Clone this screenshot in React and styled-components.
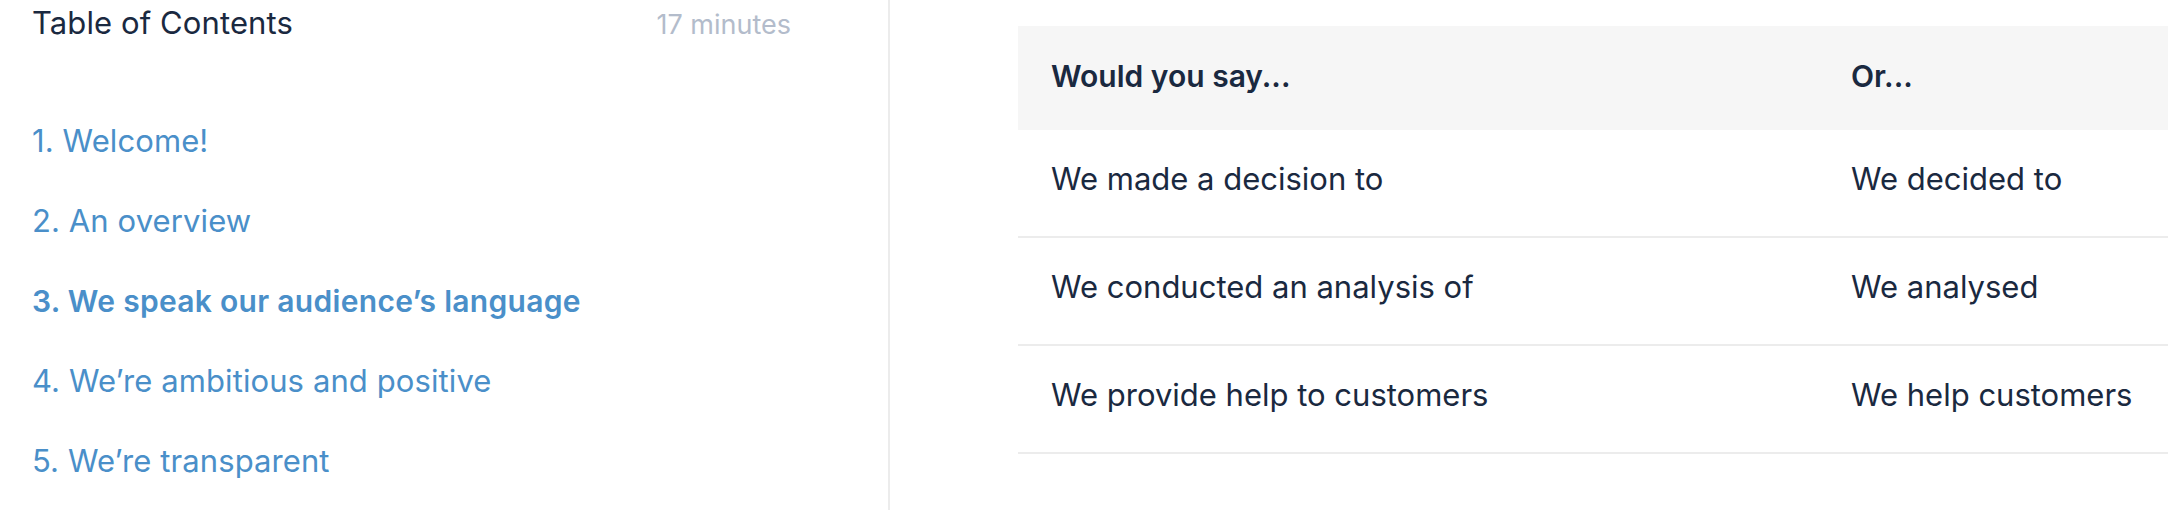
import React from 'react'
import styled, { createGlobalStyle } from 'styled-components'

const GlobalStyle = createGlobalStyle`
  html, body {
    margin: 0;
    padding: 0;
    background: #fff;
    overflow: hidden;
  }
  body {
    font-family: Inter, "Noto Sans", sans-serif;
    color: #1a2940;
  }
`

const Page = styled.div`
  display: flex;
  width: 2168px;
  height: 510px;
  overflow: hidden;
`

// Left column: table of contents
const Sidebar = styled.aside`
  flex: 0 0 890px;
  box-sizing: border-box;
  padding: 5px 97px 0 32px;
  border-right: 2px solid #ececec;
`

const SidebarHead = styled.div`
  display: flex;
  justify-content: space-between;
  align-items: baseline;
  line-height: 36px;
`

const Title = styled.h2`
  margin: 0;
  font-size: 31px;
  font-weight: 400;
  letter-spacing: 0.1px;
  color: #1a2940;
`

const Duration = styled.span`
  font-size: 27px;
  color: #b3bccb;
`

const TocList = styled.ol`
  list-style: none;
  margin: 80px 0 0;
  padding: 0;
  display: flex;
  flex-direction: column;
  gap: 44px;
`

const TocItem = styled.li`
  font-size: ${p => (p.active ? 30 : 31)}px;
  line-height: 36px;
  color: #4a8fc9;
  letter-spacing: ${p => (p.active ? 0.3 : 0.1)}px;
  font-weight: ${p => (p.active ? 600 : 400)};
`

// Right column: comparison table
const Main = styled.main`
  flex: 1;
  overflow: hidden;
  padding: 26px 0 0 128px;
`

const Table = styled.table`
  width: 1600px;
  border-collapse: collapse;
  table-layout: fixed;
  line-height: 36px;
`

const HeadCell = styled.th`
  text-align: left;
  font-size: 30px;
  font-weight: 600;
  background: #f6f6f6;
  padding: 32px 33px 34px;
  border-bottom: 2px solid #f6f6f6;
`

const Row = styled.tr`
  border-bottom: 2px solid #ececec;
`

const Cell = styled.td`
  padding: 31px 33px 39px;
  font-size: 31px;
  font-weight: 400;
`

const toc = [
  '1. Welcome!',
  '2. An overview',
  '3. We speak our audience’s language',
  '4. We’re ambitious and positive',
  '5. We’re transparent',
]

const rows = [
  ['We made a decision to', 'We decided to'],
  ['We conducted an analysis of', 'We analysed'],
  ['We provide help to customers', 'We help customers'],
]

const App = () => (
  <>
    <GlobalStyle />
    <Page>
      <Sidebar>
        <SidebarHead>
          <Title>Table of Contents</Title>
          <Duration>17 minutes</Duration>
        </SidebarHead>
        <TocList>
          {toc.map((item, i) => (
            <TocItem key={item} active={i === 2}>
              {item}
            </TocItem>
          ))}
        </TocList>
      </Sidebar>
      <Main>
        <Table>
          <thead>
            <tr>
              <HeadCell>Would you say...</HeadCell>
              <HeadCell>Or...</HeadCell>
            </tr>
          </thead>
          <tbody>
            {rows.map(([a, b]) => (
              <Row key={a}>
                <Cell>{a}</Cell>
                <Cell>{b}</Cell>
              </Row>
            ))}
          </tbody>
        </Table>
      </Main>
    </Page>
  </>
)

export default App
